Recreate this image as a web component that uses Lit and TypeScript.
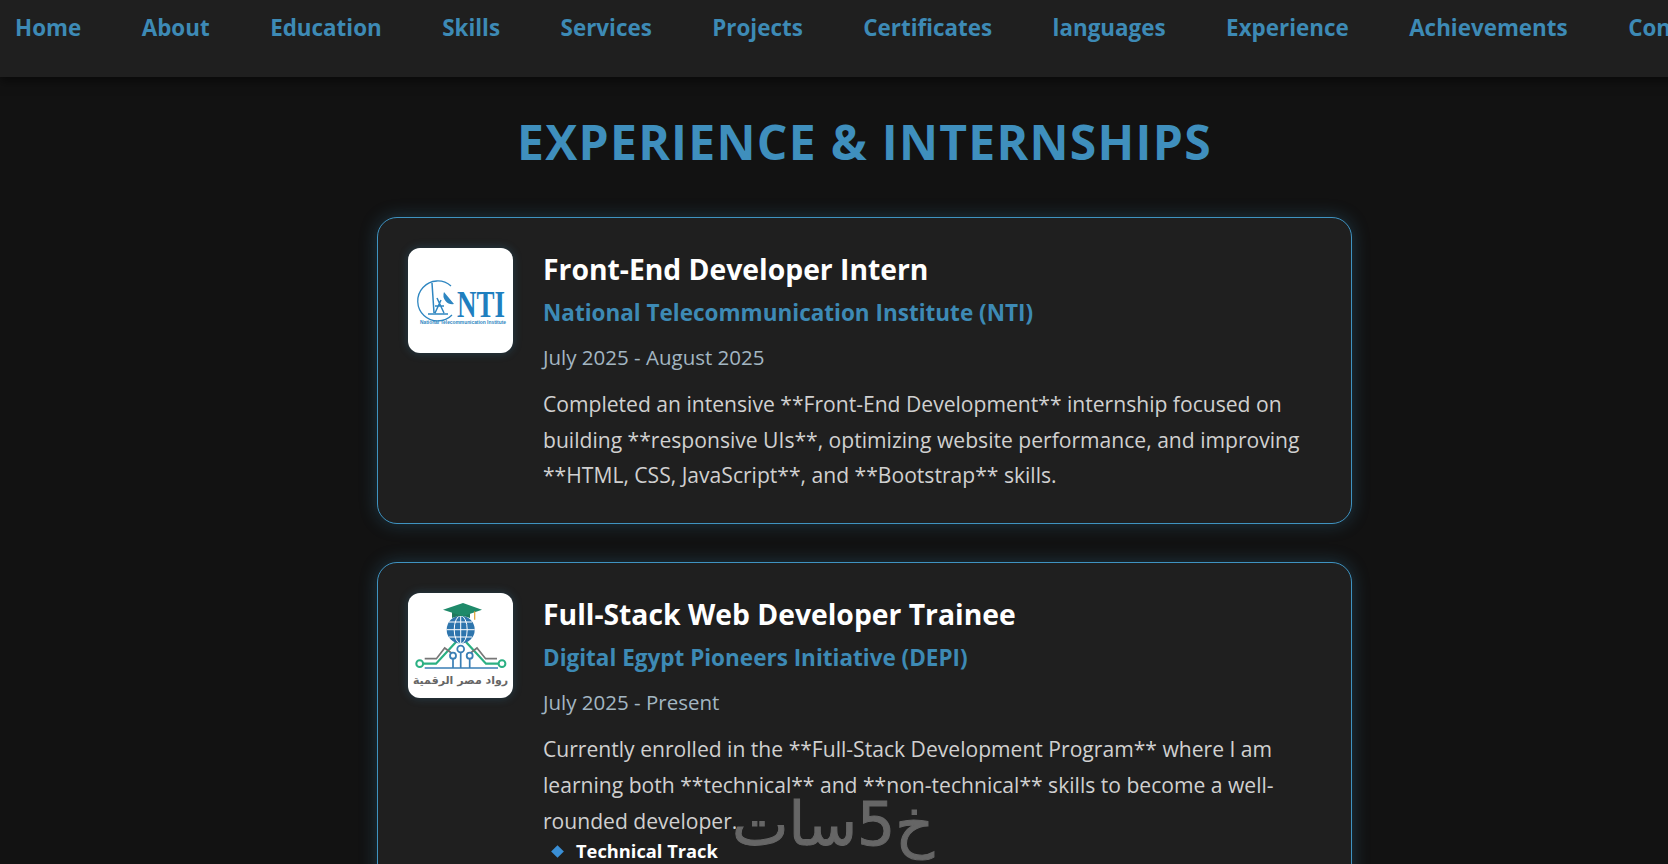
import { LitElement, html, css } from "lit";
import { customElement } from "lit/decorators.js";

const links = ["Home","About","Education","Skills","Services","Projects","Certificates","languages","Experience","Achievements","Contact"];

@customElement("app-root")
export class AppRoot extends LitElement {
  static styles = css`
    :host { display:block; width:1668px; height:864px; overflow:hidden; background:#121212; font-family:"Open Sans","Noto Sans",sans-serif; position:relative; }
    .page { width:1729px; }
    nav { height:77px; background:#1f1f1f; display:flex; gap:60.5px; padding:10px 15px 0; box-sizing:border-box; box-shadow:0 4px 10px rgba(0,0,0,.5); }
    nav a { font-size:22.4px; font-weight:700; color:#3d8ab5; line-height:36px; white-space:nowrap; }
    h1 { margin:33px 0 0; text-align:center; font-size:48px; line-height:64px; font-weight:700; color:#3f8fbd; letter-spacing:1.3px; }
    .cards { width:975px; margin:43px auto 0; display:flex; flex-direction:column; gap:38px; }
    .card { display:flex; gap:30px; padding:30px; box-sizing:border-box; background:#1f1f1f; border:1px solid #3f93c1; border-radius:20px; box-shadow:0 0 18px rgba(61,138,181,.3); }
    .logo { flex:none; width:105px; height:105px; border-radius:12px; background:#fff; box-shadow:0 0 10px rgba(61,138,181,.3); }
    h2 { margin:1px 0 0; font-size:28.3px; line-height:40px; color:#fff; font-weight:700; }
    h3 { margin:4px 0 0; font-size:22.5px; line-height:40px; color:#3d8ab5; font-weight:700; }
    .date { margin:4px 0 0; font-size:20.5px; line-height:40px; color:#a3b6c2; }
    p { margin:9px 0 0; font-size:21.1px; line-height:35.7px; color:#d0d0d0; }
    ul { list-style:none; margin:-1px 0 0; padding:0 0 0 10px; }
    li { font-size:18.3px; line-height:28px; font-weight:700; color:#fff; display:flex; align-items:center; gap:14px; }
    .dia { width:9px; height:9px; background:#3a8fd6; transform:rotate(45deg); }
    .wm { position:absolute; left:732px; top:787px; font-family:"DejaVu Sans",sans-serif; font-size:60px; line-height:74px; color:#666; -webkit-text-stroke:1px #666; direction:rtl; }
    svg { display:block; }
  `;
  render() {
    return html`<div class="page">
      <nav>${links.map(l => html`<a>${l}</a>`)}</nav>
      <h1>EXPERIENCE &amp; INTERNSHIPS</h1>
      <div class="cards">
        <div class="card">
          <div class="logo">
            <svg width="105" height="105" viewBox="0 0 105 105">
              <path d="M43 38 A20 20 0 1 0 44 67" fill="none" stroke="#2e86c1" stroke-width="1.3"/>
              <path d="M24 35 L26 65 M20 66 H40 M29 50 L36 65 M33 52 L27 65 M27 58 H36" fill="none" stroke="#2e86c1" stroke-width="1.5"/>
              <path d="M36 44 A9 9 0 0 0 46 56 Z" fill="#2e86c1"/>
              <text x="49" y="69" font-family="Liberation Serif" font-weight="700" font-size="38" fill="#1f7fbf" textLength="48" lengthAdjust="spacingAndGlyphs">NTI</text>
              <text x="12" y="76" font-family="Liberation Sans" font-size="5" font-weight="700" fill="#2e86c1" textLength="86" lengthAdjust="spacingAndGlyphs">National Telecommunication Institute</text>
            </svg>
          </div>
          <div class="body">
            <h2>Front-End Developer Intern</h2>
            <h3>National Telecommunication Institute (NTI)</h3>
            <div class="date">July 2025 - August 2025</div>
            <p>Completed an intensive **Front-End Development** internship focused on building **responsive UIs**, optimizing website performance, and improving **HTML, CSS, JavaScript**, and **Bootstrap** skills.</p>
          </div>
        </div>
        <div class="card">
          <div class="logo">
            <svg width="105" height="105" viewBox="0 0 105 105">
              <path d="M15 70.7 H28 L48 49 M58 49 L78 70.7 H90" fill="none" stroke="#2bb083" stroke-width="2.2"/>
              <path d="M16.7 65.7 H28.4 L36.7 55 L43.4 60 M89 65.7 H77.6 L69 55 L62.6 60" fill="none" stroke="#777" stroke-width="1.7"/>
              <path d="M16.7 75 H90 M45 65 V75 M52.7 59 V75 M61.7 65 V75" fill="none" stroke="#3a7fb5" stroke-width="1.7"/>
              <circle cx="52.7" cy="36.7" r="14" fill="#2e75ad"/>
              <ellipse cx="52.7" cy="36.7" rx="6.5" ry="14" fill="none" stroke="#fff" stroke-width="1"/>
              <path d="M38.7 36.7 H66.7 M52.7 22.7 V50.7 M41 29 H64 M41 44 H64" stroke="#fff" stroke-width="1"/>
              <path d="M44 19 V25 Q53 21 62 25 V19 Z" fill="#1f7a5e"/>
              <path d="M55 10 L74 16.7 L55 23.3 L35 16.7 Z" fill="#1f8a6a"/>
              <path d="M66.7 18.3 V26.7" stroke="#e0a030" stroke-width="1.2"/>
              <circle cx="45" cy="62.7" r="3" fill="#fff" stroke="#3a7fb5" stroke-width="1.8"/>
              <circle cx="52.7" cy="56" r="3.4" fill="#fff" stroke="#3a7fb5" stroke-width="1.8"/>
              <circle cx="61.7" cy="62.7" r="3" fill="#fff" stroke="#3a7fb5" stroke-width="1.8"/>
              <circle cx="11.7" cy="70.7" r="3.4" fill="#fff" stroke="#2bb083" stroke-width="2"/>
              <circle cx="94" cy="70.7" r="3.4" fill="#fff" stroke="#2bb083" stroke-width="2"/>
              <text x="52.5" y="91" text-anchor="middle" direction="rtl" font-family="DejaVu Sans" font-weight="700" font-size="11" fill="#666">رواد مصر الرقمية</text>
            </svg>
          </div>
          <div class="body">
            <h2>Full-Stack Web Developer Trainee</h2>
            <h3>Digital Egypt Pioneers Initiative (DEPI)</h3>
            <div class="date">July 2025 - Present</div>
            <p>Currently enrolled in the **Full-Stack Development Program** where I am learning both **technical** and **non-technical** skills to become a well-rounded developer.</p>
            <ul><li><span class="dia"></span>Technical Track</li></ul>
          </div>
        </div>
      </div>
    </div>
    <div class="wm">خ5سات</div>`;
  }
}
